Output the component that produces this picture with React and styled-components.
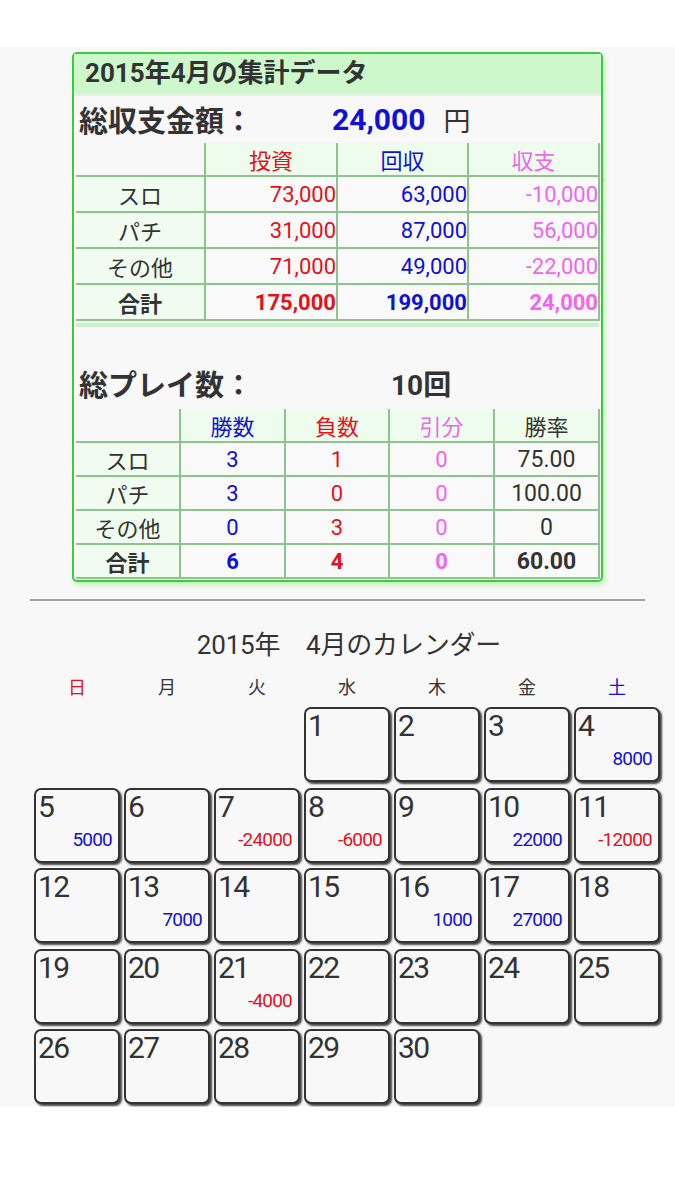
import React from "react";
import styled, { createGlobalStyle } from "styled-components";

const GlobalStyle = createGlobalStyle`
  body {
    margin: 0;
    background: #ffffff;
    font-family: Roboto, "Noto Sans CJK JP", sans-serif;
    color: #333;
  }
`;

const RED = "#e8101a";
const BLUE = "#1010d8";
const PINK = "#f066f0";

const moneyRows = [
  { label: "スロ", inv: "73,000", ret: "63,000", bal: "-10,000" },
  { label: "パチ", inv: "31,000", ret: "87,000", bal: "56,000" },
  { label: "その他", inv: "71,000", ret: "49,000", bal: "-22,000" },
  { label: "合計", inv: "175,000", ret: "199,000", bal: "24,000", total: true },
];

const playRows = [
  { label: "スロ", win: "3", lose: "1", draw: "0", rate: "75.00" },
  { label: "パチ", win: "3", lose: "0", draw: "0", rate: "100.00" },
  { label: "その他", win: "0", lose: "3", draw: "0", rate: "0" },
  { label: "合計", win: "6", lose: "4", draw: "0", rate: "60.00", total: true },
];

const weekdays = [
  { name: "日", color: RED },
  { name: "月" },
  { name: "火" },
  { name: "水" },
  { name: "木" },
  { name: "金" },
  { name: "土", color: BLUE },
];

// value per day, sign decides colour
const dayValues = {
  4: 8000,
  5: 5000,
  7: -24000,
  8: -6000,
  10: 22000,
  11: -12000,
  13: 7000,
  16: 1000,
  17: 27000,
  21: -4000,
};

const App = () => {
  const days = [];
  for (let d = 1; d <= 30; d++) days.push(d);

  return (
    <>
      <GlobalStyle />
      <Page>
        <Panel>
          <PanelHeader>2015年4月の集計データ</PanelHeader>
          <SummaryLine>
            <SummaryLabel>総収支金額：</SummaryLabel>
            <SummaryValue color={BLUE}>24,000</SummaryValue>
            <Unit>円</Unit>
          </SummaryLine>

          <Table size={22}>
            <colgroup>
              <col style={{ width: 129 }} />
              <col style={{ width: 132 }} />
              <col style={{ width: 131 }} />
              <col style={{ width: 131 }} />
            </colgroup>
            <thead>
              <tr>
                <Blank />
                <Head color={RED}>投資</Head>
                <Head color={BLUE}>回収</Head>
                <Head color={PINK}>収支</Head>
              </tr>
            </thead>
            <tbody>
              {moneyRows.map((r) => (
                <Row key={r.label} h={36}>
                  <Label bold={r.total}>{r.label}</Label>
                  <Cell right color={RED} bold={r.total}>{r.inv}</Cell>
                  <Cell right color={BLUE} bold={r.total}>{r.ret}</Cell>
                  <Cell right color={PINK} bold={r.total}>{r.bal}</Cell>
                </Row>
              ))}
            </tbody>
          </Table>
          <GreenBar />

          <PlayLine>
            <SummaryLabel>総プレイ数：</SummaryLabel>
            <PlayValue>10回</PlayValue>
          </PlayLine>

          <Table size={22}>
            <colgroup>
              <col style={{ width: 104 }} />
              <col style={{ width: 105 }} />
              <col style={{ width: 104 }} />
              <col style={{ width: 105 }} />
              <col style={{ width: 105 }} />
            </colgroup>
            <thead>
              <tr>
                <Blank />
                <Head color={BLUE}>勝数</Head>
                <Head color={RED}>負数</Head>
                <Head color={PINK}>引分</Head>
                <Head color="#333">勝率</Head>
              </tr>
            </thead>
            <tbody>
              {playRows.map((r) => (
                <Row key={r.label} h={34}>
                  <Label bold={r.total}>{r.label}</Label>
                  <Cell color={BLUE} bold={r.total}>{r.win}</Cell>
                  <Cell color={RED} bold={r.total}>{r.lose}</Cell>
                  <Cell color={PINK} bold={r.total}>{r.draw}</Cell>
                  <Cell color="#333" bold={r.total} num>{r.rate}</Cell>
                </Row>
              ))}
            </tbody>
          </Table>
        </Panel>

        <Separator />

        <Calendar>
          <CalTitle>2015年　4月のカレンダー</CalTitle>
          <WeekRow>
            {weekdays.map((w) => (
              <WeekName key={w.name} color={w.color}>
                {w.name}
              </WeekName>
            ))}
          </WeekRow>
          <DayGrid>
            {[0, 1, 2].map((i) => (
              <div key={"e" + i} />
            ))}
            {days.map((d) => {
              const v = dayValues[d];
              return (
                <DayCell key={d}>
                  <DayNum>{d}</DayNum>
                  {v !== undefined && (
                    <DayValue color={v < 0 ? RED : BLUE}>{v}</DayValue>
                  )}
                </DayCell>
              );
            })}
          </DayGrid>
        </Calendar>
      </Page>
    </>
  );
};

//styled Components
const Page = styled.div`
  margin-top: 47px;
  background: #f8f8f8;
  padding: 5px 0 3px;
`;

const Panel = styled.div`
  width: 527px;
  margin: 0 auto;
  border: 2px solid #40c840;
  border-radius: 5px;
  box-shadow: 2px 3px 5px #b8f4b0;
  background: #f8f8f8;
  padding-bottom: 1px;
`;

const PanelHeader = styled.div`
  height: 40px;
  line-height: 38px;
  background: #ccf8cc;
  padding-left: 11px;
  font-size: 26px;
  font-weight: 700;
  color: #333;
  border-bottom: 2px solid #e2f2e2;
`;

const SummaryLine = styled.div`
  display: flex;
  align-items: center;
  height: 46px;
  padding-left: 5px;
`;

const SummaryLabel = styled.div`
  width: 253px;
  font-size: 29px;
  font-weight: 700;
  color: #333;
`;

const SummaryValue = styled.div`
  font-size: 30px;
  font-weight: 700;
  color: ${(p) => p.color};
`;

const Unit = styled.div`
  margin-left: 18px;
  font-size: 27px;
  color: #333;
`;

const PlayLine = styled(SummaryLine)`
  height: 48px;
  margin-top: 32px;
  margin-bottom: 2px;
`;

const PlayValue = styled.div`
  margin-left: 59px;
  font-size: 28px;
  font-weight: 700;
  color: #333;
`;

const Table = styled.table`
  width: 523px;
  margin: 1px 2px 0;
  border-collapse: collapse;
  table-layout: fixed;
  font-size: ${(p) => p.size}px;
`;

const Blank = styled.th`
  border: none;
  background: transparent;
`;

const Head = styled.th`
  height: 32px;
  padding: 0;
  font-weight: 400;
  color: ${(p) => p.color};
  background: #edfced;
  border: 2px solid #8cc48c;
  border-top: none;
  text-align: center;
`;

const Row = styled.tr`
  height: ${(p) => p.h}px;
`;

const Label = styled.td`
  padding: 0;
  text-align: center;
  background: #effcef;
  border-top: 2px solid #8cc48c;
  border-bottom: 2px solid #8cc48c;
  font-weight: ${(p) => (p.bold ? 700 : 400)};
  color: #333;
`;

const Cell = styled.td`
  padding: 0;
  text-align: ${(p) => (p.right ? "right" : "center")};
  font-size: ${(p) => (p.num ? "23px" : "inherit")};
  color: ${(p) => p.color};
  font-weight: ${(p) => (p.bold ? 700 : 400)};
  background: #f9f9f9;
  border: 2px solid #8cc48c;
`;

const GreenBar = styled.div`
  height: 4px;
  margin: 2px 2px 0;
  background: #c8f2c8;
`;

const Separator = styled.div`
  height: 2px;
  margin: 17px 30px 0;
  background: #a0a0a0;
`;

const Calendar = styled.div`
  width: 630px;
  margin-left: 34px;
`;

const CalTitle = styled.div`
  margin-top: 29px;
  height: 30px;
  line-height: 30px;
  text-align: center;
  font-size: 26px;
  letter-spacing: -0.2px;
  color: #333;
`;

const WeekRow = styled.div`
  margin-top: 18px;
  display: grid;
  grid-template-columns: repeat(7, 86px);
  column-gap: 4px;
`;

const WeekName = styled.div`
  height: 20px;
  line-height: 20px;
  text-align: center;
  font-size: 18px;
  color: ${(p) => p.color || "#333"};
`;

const DayGrid = styled.div`
  margin-top: 9px;
  display: grid;
  grid-template-columns: repeat(7, 86px);
  grid-auto-rows: 75px;
  column-gap: 4px;
  row-gap: 5.5px;
`;

const DayCell = styled.div`
  box-sizing: border-box;
  display: flex;
  flex-direction: column;
  justify-content: space-between;
  border: 2px solid #333;
  border-radius: 7px;
  background: #f8f8f8;
  box-shadow: 2px 2px 2px #444;
  padding: 2px 6px 12px 2px;
`;

const DayNum = styled.div`
  font-size: 30px;
  line-height: 30px;
  color: #333;
  letter-spacing: -1.5px;
`;

const DayValue = styled.div`
  text-align: right;
  font-size: 19px;
  line-height: 18px;
  letter-spacing: -0.8px;
  color: ${(p) => p.color};
`;

export default App;
